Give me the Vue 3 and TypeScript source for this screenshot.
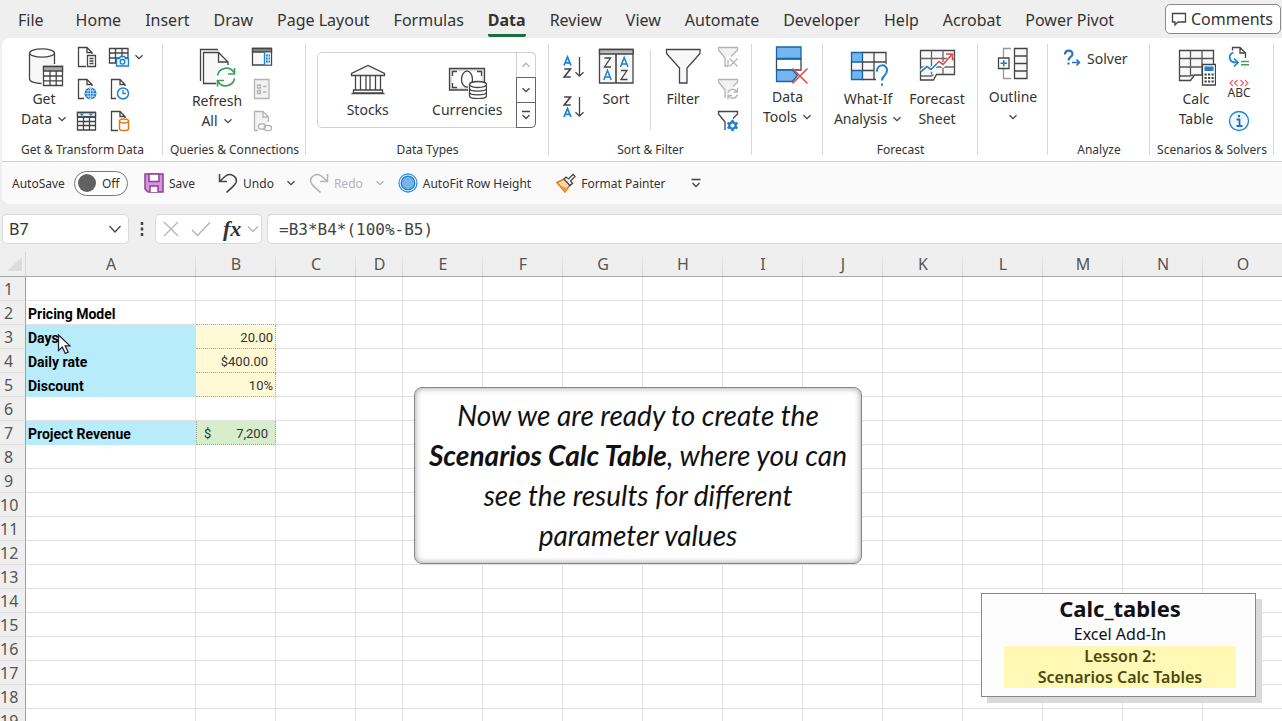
<script setup lang="ts">
import { h, ref } from 'vue'

interface Cell {
  text: string
  kind: string
}

const tabs: string[] = [
  'File', 'Home', 'Insert', 'Draw', 'Page Layout', 'Formulas', 'Data', 'Review',
  'View', 'Automate', 'Developer', 'Help', 'Acrobat', 'Power Pivot',
]
const activeTab = ref('Data')
const autoSave = ref(false)
const cellName = ref('B7')
const formula = ref('=B3*B4*(100%-B5)')

const columns: string[] = 'ABCDEFGHIJKLMNO'.split('')
const rowCount = 20

const cells: Record<string, Cell> = {
  A2: { text: 'Pricing Model', kind: 'title' },
  A3: { text: 'Days', kind: 'title label' },
  A4: { text: 'Daily rate', kind: 'title label' },
  A5: { text: 'Discount', kind: 'title label' },
  A7: { text: 'Project Revenue', kind: 'title label' },
  B2: { text: '', kind: 'above-entry' },
  B3: { text: '20.00', kind: 'entry' },
  B4: { text: '$400.00', kind: 'entry money' },
  B5: { text: '10%', kind: 'entry' },
  B7: { text: '7,200', kind: 'entry money result' },
}

function cellAt(col: string, row: number): Cell {
  return cells[col + row] ?? { text: '', kind: '' }
}

const Chevron = () =>
  h('svg', { class: 'chevron', width: 10, height: 10, viewBox: '0 0 10 10', 'aria-hidden': 'true' }, [
    h('path', { d: 'M1.5 3.2 5 6.7 8.5 3.2' }),
  ])
</script>

<template>
  <div class="app">
    <nav class="tabs" aria-label="Ribbon tabs">
      <button
        v-for="tab in tabs"
        :key="tab"
        type="button"
        class="tab"
        :class="{ active: tab === activeTab }"
        @click="activeTab = tab"
      ><span>{{ tab }}</span></button>
      <button type="button" class="comments">
        <svg width="16" height="16" viewBox="0 0 16 16"><path d="M1.500 2.500h13v8.500H7L4 14V11H1.500z" /></svg>
        Comments
      </button>
    </nav>

    <div class="panel">
      <div class="ribbon">
        <section class="group g-get">
          <div class="body">
            <button type="button" class="big">
              <svg width="40" height="44" viewBox="0 0 40 44">
                <path d="M5.500 8v26c0 2.500 5 4.500 12.500 4.500V20H31V8" fill="#f8f8f8" stroke="none" />
                <path d="M5.500 8v26c0 2.500 5 4.500 12 4.500M30.500 8v11" />
                <ellipse cx="18" cy="8" rx="12.500" ry="4.200" fill="#fff" />
                <path d="M19.500 21.500h19v19h-19z" fill="#fff" />
                <path d="M19.500 21.500h19v4.500h-19z" fill="#aaa" />
                <path d="M19.500 31h19M19.500 35.800h19M26 26v14.500M32.200 26v14.500" />
              </svg>
              <span>Get</span><span>Data <Chevron /></span>
            </button>
            <div class="stack">
              <button type="button" aria-label="From Text/CSV">
                <svg width="22" height="22" viewBox="0 0 22 22">
                  <path d="M10 20.500H2.500v-19H11l5 5V8M11 1.500v5h5" fill="none" />
                  <path d="M11.500 9.500h8v11h-8z" fill="#fff" />
                  <path d="M13.500 12.500h4M13.500 15h4M13.500 17.500h4" />
                </svg>
              </button>
              <button type="button" aria-label="From Web">
                <svg width="22" height="22" viewBox="0 0 22 22">
                  <path d="M8 20.500H2.500v-19H11l5 5V8M11 1.500v5h5" />
                  <circle cx="14.500" cy="15.500" r="6" fill="#1f7fd0" stroke="none" />
                  <path d="M9 15.500h11M14.500 10v11M10 12.800h9M10 18.200h9" stroke="#fff" stroke-width="0.600" />
                  <ellipse cx="14.500" cy="15.500" rx="2.700" ry="5.500" stroke="#fff" stroke-width="0.600" />
                </svg>
              </button>
              <button type="button" aria-label="From Table/Range">
                <svg width="22" height="22" viewBox="0 0 22 22">
                  <path d="M1.500 2.500h18v17.500h-18z" fill="#fff" />
                  <path d="M1.500 2.500h18v4.500h-18z" fill="#d8ecfb" />
                  <path d="M1.500 7h18M1.500 11.500h18M1.500 15.500h18M7.500 7v13M13.500 7v13" />
                  <path d="M3.500 3.500h4.600L5.800 6zM12.500 3.500h4.600L14.800 6z" fill="#1f7fd0" stroke="none" />
                </svg>
              </button>
            </div>
            <div class="stack wide">
              <button type="button" aria-label="From Picture">
                <svg width="22" height="22" viewBox="0 0 22 22">
                  <path d="M1.500 2.500h18.500v14.500h-18.500z" fill="#fff" />
                  <path d="M1.500 7h18.500M1.500 12h18.500M7.500 2.500V17M14 2.500V17" />
                  <path d="M8.500 12.500h3l1-2h4l1 2h3v7.500h-12z" fill="#e6f3fd" stroke="#1f7fd0" />
                  <circle cx="14.500" cy="15.800" r="2.300" fill="#fff" stroke="#1f7fd0" />
                </svg>
                <Chevron />
              </button>
              <button type="button" aria-label="Recent Sources">
                <svg width="22" height="22" viewBox="0 0 22 22">
                  <path d="M8 20.500H3.500v-19H12l5 5V8M12 1.500v5h5" />
                  <circle cx="15" cy="15.500" r="5.500" fill="#fff" stroke="#1f7fd0" stroke-width="1.500" />
                  <path d="M15 12v3.500h3" stroke="#1f7fd0" />
                </svg>
              </button>
              <button type="button" aria-label="Existing Connections">
                <svg width="22" height="22" viewBox="0 0 22 22">
                  <path d="M10 20.500H3.500v-19H12l5 5V8M12 1.500v5h5" />
                  <path d="M11.500 11v8c0 2 9 2 9 0v-8" fill="#fff" stroke="#e8740c" stroke-width="1.500" />
                  <ellipse cx="16" cy="11" rx="4.500" ry="2" fill="#fff" stroke="#e8740c" stroke-width="1.500" />
                </svg>
              </button>
            </div>
          </div>
          <h2>Get &amp; Transform Data</h2>
        </section>

        <section class="group g-queries">
          <div class="body">
            <button type="button" class="big">
              <svg width="40" height="46" viewBox="0 0 40 46">
                <path d="M3.500 36V4.500H21" />
                <path d="M6.500 38.500v-30.500H22l9 9V38.500z" fill="#f8f8f8" stroke="none" />
                <path d="M19 38.500H6.500V7.500H21.500L31 17v3M21.500 7.500V17H31" />
                <circle cx="29" cy="32" r="10.500" fill="#fff" stroke="none" />
                <path d="M20.500 30.500a9 9 0 0 1 16.500-3M37.500 23v6H31M37.500 33.500a9 9 0 0 1-16.500 3M20.500 41.500v-6H27" stroke="#3f9f5b" stroke-width="1.700" />
              </svg>
              <span>Refresh</span><span>All <Chevron /></span>
            </button>
            <div class="stack">
              <button type="button" aria-label="Queries &amp; Connections">
                <svg width="22" height="22" viewBox="0 0 22 22">
                  <path d="M1.500 2.500h19v16.500h-19z" fill="#f8f8f8" />
                  <path d="M1.500 2.500h19v3.500h-19z" fill="#888" />
                  <path d="M14 6.500h6V18.500h-6z" fill="#e6f3fd" stroke="none" />
                  <path d="M13.500 6v13" stroke="#1f7fd0" />
                  <path d="M15 9.500h4M15 12.500h4M15 15.500h4" stroke="#1f7fd0" stroke-width="1.800" stroke-dasharray="1.800 0.800" />
                </svg>
              </button>
              <button type="button" aria-label="Properties" disabled>
                <svg width="22" height="22" viewBox="0 0 22 22" class="dim">
                  <path d="M3.500 1.500h14.500v19H3.500z" fill="#f2f2f2" />
                  <path d="M6.500 7h3v3h-3zM6.500 12.500h3v3h-3zM12 8.500h3.500M12 14h3.500" />
                </svg>
              </button>
              <button type="button" aria-label="Edit Links" disabled>
                <svg width="22" height="22" viewBox="0 0 22 22" class="dim">
                  <path d="M7 20.500H3.500v-19H12l5.500 5.500V12M12 1.500v5.500h5.500" fill="#f2f2f2" />
                  <rect x="7.500" y="14" width="7" height="5" rx="2.500" fill="#fff" />
                  <rect x="13" y="15.500" width="7.500" height="5" rx="2.500" />
                </svg>
              </button>
            </div>
          </div>
          <h2>Queries &amp; Connections</h2>
        </section>

        <section class="group g-types">
          <div class="body">
            <div class="gallery">
              <button type="button" class="tile">
                <svg width="40" height="36" viewBox="0 0 40 36">
                  <path d="M3.500 12.500v-2L20 2.500l16.500 8v2z" fill="#f8f8f8" />
                  <path d="M7.500 12.500V27M12.500 12.500V27M18 12.500V27M22 12.500V27M27.500 12.500V27M32.500 12.500V27M5.500 27h29v3h-29zM3.500 30.500h33" />
                </svg>
                Stocks
              </button>
              <button type="button" class="tile">
                <svg width="40" height="36" viewBox="0 0 40 36">
                  <path d="M2.500 5.500h35v21.500h-35z" fill="#ddd" />
                  <path d="M5 8h30v16.500H5z" fill="#fff" stroke="none" />
                  <path d="M10 8.500H5.500V13M30 8.500h4.500V13M10 24.500H5.500V20" />
                  <ellipse cx="20" cy="16.200" rx="5.500" ry="8" />
                  <path d="M22.500 21v12c0 4 17 4 17 0V21z" fill="#fff" stroke="#fff" stroke-width="3" />
                  <path d="M22.500 21.500v11.500c0 3.500 17 3.500 17 0V21.500M22.500 25.500c0 3.500 17 3.500 17 0M22.500 29.300c0 3.500 17 3.500 17 0" fill="none" />
                  <ellipse cx="31" cy="21.500" rx="8.500" ry="3" fill="#fff" />
                </svg>
                Currencies
              </button>
              <div class="spinner">
                <button type="button" aria-label="Scroll up" disabled>
                  <svg width="10" height="10" viewBox="0 0 10 10" class="dim"><path d="M1.500 6.700 5 3.200 8.500 6.700" /></svg>
                </button>
                <button type="button" aria-label="Scroll down"><Chevron /></button>
                <button type="button" aria-label="More data types">
                  <svg width="10" height="10" viewBox="0 0 10 10"><path d="M1 1.500h8M1.500 5 5 8.500 8.500 5" /></svg>
                </button>
              </div>
            </div>
          </div>
          <h2>Data Types</h2>
        </section>

        <section class="group g-sort">
          <div class="body">
            <div class="orders">
              <button type="button" aria-label="Sort A to Z">
                <svg width="24" height="24" viewBox="0 0 24 24">
                  <path d="M3 10.500 6.500 2 10 10.500M4.200 7.800h4.600" stroke="#1f7fd0" stroke-width="1.700" />
                  <path d="M3.200 14h6.300L3.200 22h6.600" stroke-width="1.600" />
                  <path d="M18.500 2v19M14.500 17.200l4 4 4-4" />
                </svg>
              </button>
              <button type="button" aria-label="Sort Z to A">
                <svg width="24" height="24" viewBox="0 0 24 24">
                  <path d="M3.200 2h6.300L3.200 10h6.600" stroke-width="1.600" />
                  <path d="M3 22 6.500 13.500 10 22M4.200 19.300h4.600" stroke="#1f7fd0" stroke-width="1.700" />
                  <path d="M18.500 2v19M14.500 17.200l4 4 4-4" />
                </svg>
              </button>
            </div>
            <button type="button" class="big sort">
              <svg width="40" height="44" viewBox="0 0 40 44">
                <path d="M3.500 4.500h33.500v33.500h-33.500z" fill="#f8f8f8" />
                <path d="M3.500 4.500h33.500v4.500h-33.500z" fill="#bbb" />
                <path d="M20 9v29" stroke-width="1.600" />
                <path d="M8.500 13h6L8.500 22h6.500M25 25.500h6L25 34.500h6.500" />
                <path d="M7.800 35 11.500 25.500 15.200 35M9 32h5M24.500 22 28.200 12.500 32 22M25.700 19h5" stroke="#1f7fd0" stroke-width="1.500" />
              </svg>
              <span>Sort</span>
            </button>
            <div class="rule"></div>
            <button type="button" class="big filter">
              <svg width="40" height="44" viewBox="0 0 40 44">
                <path d="M3.500 4.500h33.500v4L24 23v15h-7.500V23L3.500 8.500z" fill="#f8f8f8" />
              </svg>
              <span>Filter</span>
            </button>
            <div class="stack">
              <button type="button" aria-label="Clear filter" disabled>
                <svg width="22" height="22" viewBox="0 0 22 22" class="dim">
                  <path d="M8 12 1.500 4V1.500h19V4L14 10.500" fill="#f2f2f2" />
                  <path d="M8 12v8h3v-6M12.500 12.500l8 8M20.500 12.500l-8 8" />
                </svg>
              </button>
              <button type="button" aria-label="Reapply filter" disabled>
                <svg width="22" height="22" viewBox="0 0 22 22" class="dim">
                  <path d="M8 20V12L1.500 4V1.500h19V4L16 8.500" fill="#f2f2f2" />
                  <path d="M11 15a5 5 0 0 1 9-1.500M20.500 10v4h-4M20.500 16.500a5 5 0 0 1-9 1.500M11 21.500v-4h4" />
                </svg>
              </button>
              <button type="button" aria-label="Advanced filter">
                <svg width="22" height="22" viewBox="0 0 22 22">
                  <path d="M8 20V12L1.500 4V1.500h19V4L16 8.500" />
                  <circle cx="15.500" cy="15.500" r="3.200" stroke="#1f7fd0" stroke-width="2.400" />
                  <path d="M15.500 9.800v2M15.500 19.200v2M10.500 12.700l1.800 1M18.700 17.300l1.800 1M10.500 18.300l1.800-1M18.700 13.700l1.800-1" stroke="#1f7fd0" stroke-width="2.400" />
                </svg>
              </button>
            </div>
          </div>
          <h2>Sort &amp; Filter</h2>
        </section>

        <section class="group g-tools">
          <div class="body">
            <button type="button" class="big">
              <svg width="40" height="42" viewBox="0 0 40 42">
                <path d="M8.500 14h24.500v11h-24.500z" fill="#fff" />
                <path d="M8.500 2h24.500v11.500h-24.500zM8.500 25h16l5 5.500-5 6h-16z" fill="#74b5ef" stroke="#1763a8" />
                <path d="M24.500 23.500l15 15M39.500 23.500l-15 15" stroke="#e5483c" stroke-width="1.500" />
              </svg>
              <span>Data</span><span>Tools <Chevron /></span>
            </button>
          </div>
        </section>

        <section class="group g-forecast">
          <div class="body">
            <button type="button" class="big whatif">
              <svg width="40" height="44" viewBox="0 0 40 44">
                <path d="M3.500 7.500h34.500v27h-34.500z" fill="#f8f8f8" stroke="none" />
                <path d="M14 7.500h24V22M14 34.500h14M14 17h24M14 25.500h16M26 7.500v27" />
                <path d="M3.500 7.500h11v9.500h-11zM3.500 25.500h11v9h-11z" fill="#74b5ef" stroke="#1763a8" />
                <path d="M3.500 17v8.500M14.500 17v8.500" />
                <path d="M29 26.500c0-8 10-8 10-1 0 5-5 5-5 10.500" stroke="#fff" stroke-width="5" />
                <path d="M29 26.500c0-8 10-8 10-1 0 5-5 5-5 10M34 38.500v2.200" stroke="#1f7fd0" stroke-width="2" />
              </svg>
              <span>What-If</span><span>Analysis <Chevron /></span>
            </button>
            <button type="button" class="big sheet-btn">
              <svg width="40" height="44" viewBox="0 0 40 44">
                <path d="M3.500 5.500h34v24h-18l-3 5.500h-13z" fill="#f8f8f8" />
                <path d="M3.500 13.500h34M3.500 22h34M14.500 5.500v24M26 5.500v24M3.500 31h11l2-1.500" stroke="#666" />
                <path d="M4 26.500l6-5 4 3 8-8 4 4L36 10" stroke="#fff" stroke-width="4" />
                <path d="M4 26.500l6-5 4 3 6-6" stroke="#1f7fd0" stroke-width="1.700" />
                <path d="M20 18.500l2-2 4 3L35 9.500M29 9h6.500v6.500" stroke="#e5483c" stroke-width="1.600" />
              </svg>
              <span>Forecast</span><span>Sheet</span>
            </button>
          </div>
          <h2>Forecast</h2>
        </section>

        <section class="group g-outline">
          <div class="body">
            <button type="button" class="big">
              <svg width="40" height="42" viewBox="0 0 40 42">
                <path d="M21.500 3.500h12.500v30h-12.500zM21.500 11h12.500M21.500 18.500h12.500M21.500 26h12.500" fill="#f8f8f8" />
                <path d="M18 3.500h-7.500v30H18" stroke="#999" />
                <path d="M5.500 13h10.500v10.500H5.500z" fill="#fff" />
                <path d="M10.750 15v6.500M7.500 18.250H14" stroke="#1f7fd0" stroke-width="1.600" />
              </svg>
              <span>Outline</span><span><Chevron /></span>
            </button>
          </div>
        </section>

        <section class="group g-analyze">
          <div class="body">
            <button type="button" class="solver">
              <svg width="18" height="18" viewBox="0 0 18 18">
                <path d="M2 5.500C2 .5 9.500.5 9.500 5c0 3-4 3-4 6.500M5.500 13.500v2" stroke="#2f6fc0" stroke-width="2.200" />
                <path d="M9 13.500h7.500M13.500 10.500l3 3-3 3" stroke="#2f6fc0" stroke-width="1.600" />
              </svg>
              Solver
            </button>
          </div>
          <h2>Analyze</h2>
        </section>

        <section class="group g-scenarios">
          <div class="body">
            <button type="button" class="big">
              <svg width="40" height="44" viewBox="0 0 40 44">
                <path d="M3.500 5.500h34V30h-19l-4 5.500h-11z" fill="#f8f8f8" />
                <path d="M3.500 13.500h34M3.500 22h34M14.500 5.500V30M26 5.500V30M3.500 31h10l4-1" stroke="#555" />
                <path d="M26.500 19.500h13v20.500h-13z" fill="#fff" />
                <path d="M28.500 21.500h9v4.500h-9z" fill="#1f7fd0" stroke="none" />
                <path d="M28.500 29.500h9.500M28.500 33h9.500M28.500 36.500h9.500" stroke-width="2.200" stroke-dasharray="2.200 1.300" />
              </svg>
              <span>Calc</span><span>Table</span>
            </button>
            <div class="stack">
              <button type="button" aria-label="Convert formulas">
                <svg width="22" height="22" viewBox="0 0 22 22">
                  <path d="M4.500 4.500v-3H12l5.500 5.500V12M12 1.500V7h5.500" />
                  <path d="M5.500 6.500C0 8.500 0 16.500 8.500 16.500M6 12.500l4 4-4 4" stroke="#1f7fd0" stroke-width="1.700" />
                  <path d="M13 15.500h8M13 18.800h8" stroke="#3f9f5b" stroke-width="1.500" />
                </svg>
              </button>
              <button type="button" class="abc" aria-label="Names">
                <svg width="22" height="8" viewBox="0 0 22 8">
                  <path d="M5 1 2 4l3 3M9.500 1l-3 3 3 3M12.500 1l3 3-3 3M17 1l3 3-3 3" stroke="#e5686a" stroke-width="1.200" />
                </svg>
                ABC
              </button>
              <button type="button" aria-label="About">
                <svg width="22" height="22" viewBox="0 0 22 22">
                  <circle cx="11" cy="11" r="9.500" fill="#f0f8ff" stroke="#1f7fd0" />
                  <path d="M8.500 9.500H11.500V16M8.500 16h6" stroke="#1f6fc0" stroke-width="1.800" /><path d="M11 5v2.300" stroke="#1f6fc0" stroke-width="2.200" />
                </svg>
              </button>
            </div>
          </div>
          <h2>Scenarios &amp; Solvers</h2>
        </section>
      </div>

      <div class="quick">
        <label class="autosave">
          AutoSave
          <span class="toggle"><input v-model="autoSave" type="checkbox" /><span>Off</span></span>
        </label>
        <button type="button" class="save">
          <svg width="20" height="20" viewBox="0 0 20 20">
            <path d="M1 1h18v18H4l-3-3z" fill="#d994dc" stroke="#8d3f96" stroke-width="1.500" />
            <path d="M5 1h10v7.500H5zM6 19v-6h8v6" fill="#fff" stroke="#8d3f96" stroke-width="1.500" />
          </svg>
          Save
        </button>
        <button type="button" class="undo">
          <svg width="20" height="20" viewBox="0 0 20 20">
            <path d="M1.500 1v7.500H9M1.500 8.500 7 3.500C12-1 20 3.500 18 9.500 17 12.500 12 16 8.500 19.500" stroke-width="1.500" />
          </svg>
          Undo
        </button>
        <button type="button" class="more" aria-label="Undo history"><Chevron /></button>
        <button type="button" class="redo" disabled>
          <svg width="20" height="20" viewBox="0 0 20 20" class="dim">
            <path d="M18.500 1v7.500H11M18.500 8.500 13 3.500C8-1 0 3.500 2 9.500 3 12.500 8 16 11.500 19.500" stroke-width="1.500" />
          </svg>
          Redo
        </button>
        <button type="button" class="more" aria-label="Redo history" disabled><Chevron /></button>
        <button type="button" class="autofit">
          <svg width="20" height="20" viewBox="0 0 20 20">
            <circle cx="10" cy="10" r="9" fill="#fff" stroke="#3a93dc" />
            <circle cx="10" cy="10" r="6.800" fill="#74b5ef" stroke="#1f7fd0" />
          </svg>
          AutoFit Row Height
        </button>
        <button type="button" class="painter">
          <svg width="20" height="20" viewBox="0 0 20 20">
            <path d="M1 9.500 8 6l6 6-5 7z" fill="#fbd9a8" stroke="#e8740c" stroke-width="1.400" />
            <path d="M3 12l8.500 3.500L9 19z" fill="#f29a3a" stroke="none" />
            <path d="M8 6l2-2 2.500 2L17 1.500l2 2L14.500 8 16.500 10.500l-2.500 2z" fill="#fff" />
          </svg>
          Format Painter
        </button>
        <button type="button" class="customize" aria-label="Customize toolbar">
          <svg width="10" height="10" viewBox="0 0 10 10"><path d="M.5 1.500h9M1.500 5 5 8.500 8.500 5" /></svg>
        </button>
      </div>
    </div>

    <div class="formula-row">
      <div class="box name-box">
        <input v-model="cellName" aria-label="Name box" />
        <button type="button" aria-label="Open name list">
          <svg width="14" height="10" viewBox="0 0 14 10"><path d="M1.500 2 7 8l5.500-6" /></svg>
        </button>
      </div>
      <svg class="dots" width="4" height="14" viewBox="0 0 4 14"><path d="M2 0v3M2 5.500v3M2 11v3" stroke-width="2.500" /></svg>
      <div class="box fx-box">
        <button type="button" aria-label="Cancel" disabled>
          <svg width="16" height="16" viewBox="0 0 16 16" class="dim"><path d="M1 1l14 14M15 1 1 15" /></svg>
        </button>
        <button type="button" aria-label="Enter" disabled>
          <svg width="20" height="16" viewBox="0 0 20 16" class="dim"><path d="M1 9l5.500 5.500L19 1.500" /></svg>
        </button>
        <button type="button" class="fx" aria-label="Insert function">fx</button>
        <button type="button" aria-label="Function list">
          <svg width="12" height="10" viewBox="0 0 12 10" class="dim"><path d="M1 2.500 6 7.500l5-5" /></svg>
        </button>
      </div>
      <input v-model="formula" class="box formula" aria-label="Formula bar" />
    </div>

    <main class="sheet">
      <table>
        <colgroup>
          <col class="c-num" />
          <col v-for="col in columns" :key="col" :class="'c-' + col" />
        </colgroup>
        <thead>
          <tr>
            <th class="corner"><svg width="16" height="14" viewBox="0 0 16 14"><path d="M15 0v14H0z" fill="#dcdcdc" stroke="none" /></svg></th>
            <th v-for="col in columns" :key="col" scope="col">{{ col }}</th>
          </tr>
        </thead>
        <tbody>
          <tr v-for="row in rowCount" :key="row">
            <th scope="row">{{ row }}</th>
            <td v-for="col in columns" :key="col" :class="cellAt(col, row).kind">
              <span v-if="col === 'B' && row === 7" class="sign">$</span>{{ cellAt(col, row).text }}
            </td>
          </tr>
        </tbody>
      </table>

      <svg class="pointer" width="14" height="22" viewBox="0 0 14 22">
        <path d="M1.500 1v15.500l3.800-3.500 3 6.500 2.900-1.300-3-6.300h4.800z" fill="#fff" stroke="#223" />
      </svg>

      <p class="callout">
        Now we are ready to create the <strong>Scenarios Calc Table</strong>, where you can see the results for different parameter values
      </p>

      <aside class="card">
        <h1>Calc_tables</h1>
        <p>Excel Add-In</p>
        <p class="lesson">Lesson 2:<br />Scenarios Calc Tables</p>
      </aside>
    </main>
  </div>
</template>

<style>
body {
  margin: 0;
  overflow: hidden;
}
svg {
  display: block;
  flex: none;
  fill: none;
  stroke: #444;
  stroke-width: 1.300;
}
svg.dim,
button:disabled svg {
  stroke: #b4b4b4;
}
</style>

<style scoped>
.app {
  display: flex;
  flex-direction: column;
  height: 100vh;
  overflow: hidden;
  background: #efefef;
  color: #333;
  font-family: "Noto Sans", "Open Sans", sans-serif;
  font-size: 14px;
}
button,
input {
  margin: 0;
  padding: 0;
  border: 0;
  background: none;
  color: inherit;
  font: inherit;
}
.tabs {
  display: flex;
  flex: none;
  height: 38px;
  padding-left: 6px;
  white-space: nowrap;
}
.tab {
  padding: 2px 12px 0;
  font-size: 16px;
}
.tab:first-child {
  margin-right: 8px;
}
.tab span {
  display: block;
  height: 30px;
  line-height: 32px;
  border-bottom: 3px solid transparent;
  border-radius: 2px;
}
.tab.active {
  font-weight: 700;
}
.tab.active span {
  border-bottom-color: #1d6b43;
}
.comments {
  display: flex;
  align-items: center;
  gap: 4px;
  box-sizing: border-box;
  height: 30px;
  margin: 4px 1px 0 auto;
  padding: 0 7px 0 5px;
  border: 1px solid #8a8a8a;
  border-radius: 5px;
  background: #fff;
  font-size: 16px;
}
.panel {
  flex: none;
  margin-left: 2px;
  border-radius: 8px 0 0 8px;
  background: #fafafa;
  overflow: hidden;
}
.ribbon {
  display: flex;
  height: 123px;
  border-bottom: 1px solid #cfcfcf;
  background: #fff;
}
.group {
  display: flex;
  flex-direction: column;
  flex: none;
  box-sizing: border-box;
  padding-top: 3px;
  background: linear-gradient(#d8d8d8, #d8d8d8) right 6px / 1px 111px no-repeat;
}
.g-get { width: 161px; }
.g-queries { width: 143px; }
.g-types { width: 243px; }
.g-sort { width: 203px; }
.g-tools { width: 71px; }
.g-forecast { width: 155px; }
.g-outline { width: 70px; }
.g-analyze { width: 102px; }
.g-scenarios { width: 124px; }
.body {
  display: flex;
  flex: none;
  height: 98px;
}
.group h2 {
  margin: 0;
  font-size: 12px;
  font-weight: 400;
  line-height: 22px;
  text-align: center;
  white-space: nowrap;
}
.big {
  display: flex;
  flex-direction: column;
  align-items: center;
  width: 60px;
  height: 92px;
  margin-top: 4px;
  line-height: 20px;
  white-space: nowrap;
}
.big span {
  display: flex;
  align-items: center;
  gap: 5px;
  min-height: 20px;
}
.stack {
  display: grid;
  grid-template-rows: repeat(3, 32px);
  width: 26px;
}
.stack button {
  display: flex;
  align-items: center;
  justify-content: center;
  gap: 4px;
}
.stack.wide {
  width: 44px;
  margin-left: 8px;
}
.stack.wide button {
  justify-content: flex-start;
}
.g-get .body { padding-left: 12px; }
.g-queries .body { padding-left: 22px; }
.g-queries .big { width: 64px; }
.g-types .body { padding-left: 11px; }
.g-sort .body { padding-left: 12px; }
.g-tools .body,
.g-outline .body { justify-content: center; }
.g-forecast .body { padding-left: 8px; }
.g-analyze .body { padding-left: 15px; }
.g-scenarios .body { padding-left: 16px; }
.gallery {
  display: flex;
  box-sizing: border-box;
  width: 219px;
  height: 76px;
  margin-top: 11px;
  border: 1px solid #d0d0d0;
  border-radius: 5px;
}
.tile {
  display: flex;
  flex: 1;
  flex-direction: column;
  align-items: center;
  padding-top: 10px;
  line-height: 22px;
}
.spinner {
  display: grid;
  grid-template-rows: repeat(3, 1fr);
  width: 20px;
  margin: -1px;
}
.spinner button {
  display: grid;
  place-items: center;
  border: 1px solid #666;
}
.spinner button:first-child {
  border-color: #d0d0d0;
  border-bottom: 0;
  border-radius: 0 5px 0 0;
}
.spinner button:last-child {
  border-top-width: 0;
  border-radius: 0 0 5px 0;
}
.orders {
  display: flex;
  flex-direction: column;
  gap: 16px;
  width: 26px;
  padding-top: 14px;
}
.big.sort { width: 58px; }
.rule {
  width: 1px;
  height: 80px;
  margin: 9px 0 0 5px;
  background: #d8d8d8;
}
.big.filter { width: 64px; }
.big.whatif { width: 74px; }
.big.sheet-btn { width: 64px; }
.solver {
  display: flex;
  align-items: center;
  gap: 6px;
  height: 34px;
}
.stack .abc {
  flex-direction: column;
  gap: 0;
  font-size: 12px;
  line-height: 12px;
}
.quick {
  display: flex;
  align-items: center;
  height: 42px;
  padding-left: 10px;
  font-size: 12px;
  white-space: nowrap;
}
.quick button {
  display: flex;
  align-items: center;
  gap: 5px;
}
.quick button:disabled {
  color: #b4b4b4;
}
.autosave {
  display: flex;
  align-items: center;
  gap: 9px;
}
.toggle {
  display: flex;
  align-items: center;
  gap: 6px;
  box-sizing: border-box;
  width: 54px;
  height: 25px;
  padding-left: 3px;
  border: 1px solid #777;
  border-radius: 13px;
  background: #fff;
}
.toggle input {
  width: 18px;
  height: 18px;
  border-radius: 50%;
  background: #616161;
  appearance: none;
}
.save { margin-left: 16px; }
.undo { margin-left: 23px; }
.quick .more { margin-left: 12px; }
.redo { margin-left: 13px; }
.autofit { margin-left: 13px; }
.painter { margin-left: 25px; }
.customize { margin-left: 25px; }
.formula-row {
  display: flex;
  flex: none;
  align-items: center;
  height: 30px;
  padding: 10px 0 8px 2px;
}
.box {
  display: flex;
  align-items: center;
  box-sizing: border-box;
  height: 30px;
  border: 1px solid #dadada;
  border-radius: 5px;
  background: #fff;
}
.name-box {
  width: 127px;
  padding: 0 6px;
}
.name-box input {
  flex: 1;
  min-width: 0;
  font-size: 16px;
}
.dots {
  margin: 0 11px;
}
.fx-box {
  gap: 12px;
  width: 107px;
  padding-left: 7px;
}
.fx {
  margin-right: -6px;
  font-family: "Liberation Serif", serif;
  font-size: 22px;
  font-style: italic;
  font-weight: 700;
  line-height: 24px;
}
.formula {
  flex: 1;
  min-width: 0;
  margin-left: 5px;
  padding-left: 11px;
  border-right: 0;
  border-radius: 5px 0 0 5px;
  color: #444;
  font-family: "DejaVu Sans Mono", monospace;
  font-size: 16px;
}
.sheet {
  position: relative;
  flex: 1;
  min-height: 0;
  overflow: hidden;
  background: #fff;
}
table {
  width: 1283px;
  table-layout: fixed;
  border-collapse: separate;
  border-spacing: 0;
}
col { width: 80px; }
.c-num { width: 26px; }
.c-A { width: 170px; }
.c-D { width: 47px; }
th,
td {
  box-sizing: border-box;
  height: 24px;
  padding: 0;
  white-space: nowrap;
}
th {
  background: #efefef;
  color: #555;
  font-size: 16px;
  font-weight: 400;
  line-height: 20px;
}
thead th {
  height: 25px;
  border-bottom: 1px solid #a6a6a6;
  background: linear-gradient(#efefef, #cfcfcf) right / 1px 100% no-repeat #efefef;
}
thead .corner {
  padding-left: 7px;
  border-right: 1px solid #d8d8d8;
  background: #efefef;
}
tbody th {
  border-right: 1px solid #a0a0a0;
  border-bottom: 1px solid #dedede;
  padding-right: 8px;
  text-align: center;
}
td {
  border-right: 1px solid #e1e1e1;
  border-bottom: 1px solid #e1e1e1;
  font-family: Roboto, sans-serif;
  font-size: 13px;
  line-height: 18px;
}
.title {
  padding: 3px 0 0 2px;
  color: #000;
  font-size: 14px;
  font-weight: 700;
}
.label {
  border-color: #b9ecfb;
  background: #b9ecfb;
}
.above-entry {
  border-bottom: 1px dotted #a5a58c;
}
.entry {
  padding: 3px 2px 0 0;
  border-right: 1px dotted #a5a58c;
  border-bottom: 1px dotted #a5a58c;
  background: #fffad5;
  text-align: right;
}
.money {
  padding-right: 7px;
}
.result {
  border-left: 1px dotted #a5a58c;
  background: #d8edcb;
}
.sign {
  float: left;
  padding-left: 7px;
}
.pointer {
  position: absolute;
  left: 57px;
  top: 82px;
}
.callout {
  position: absolute;
  left: 414px;
  top: 135px;
  box-sizing: border-box;
  width: 448px;
  margin: 0;
  padding: 7px 8px 8px;
  border: 1px solid #858585;
  border-radius: 8px;
  background: #fff;
  box-shadow: inset 0 0 6px #999;
  color: #111;
  font-family: Lato, sans-serif;
  font-size: 28px;
  font-style: italic;
  line-height: 40px;
  text-align: center;
}
.card {
  position: absolute;
  right: 26px;
  bottom: 24px;
  box-sizing: border-box;
  width: 275px;
  padding: 0 19px 8px 22px;
  border: 1px solid #888;
  background: #fdfdfd;
  box-shadow: 6px 6px 0 #dadada;
  color: #111;
  text-align: center;
}
.card h1 {
  margin: 0;
  font-size: 22px;
  line-height: 28px;
}
.card p {
  margin: 0;
  font-size: 16px;
  line-height: 24px;
}
.card .lesson {
  background: #fff9b5;
  color: #4d4a10;
  font-weight: 600;
  line-height: 21px;
}
</style>
